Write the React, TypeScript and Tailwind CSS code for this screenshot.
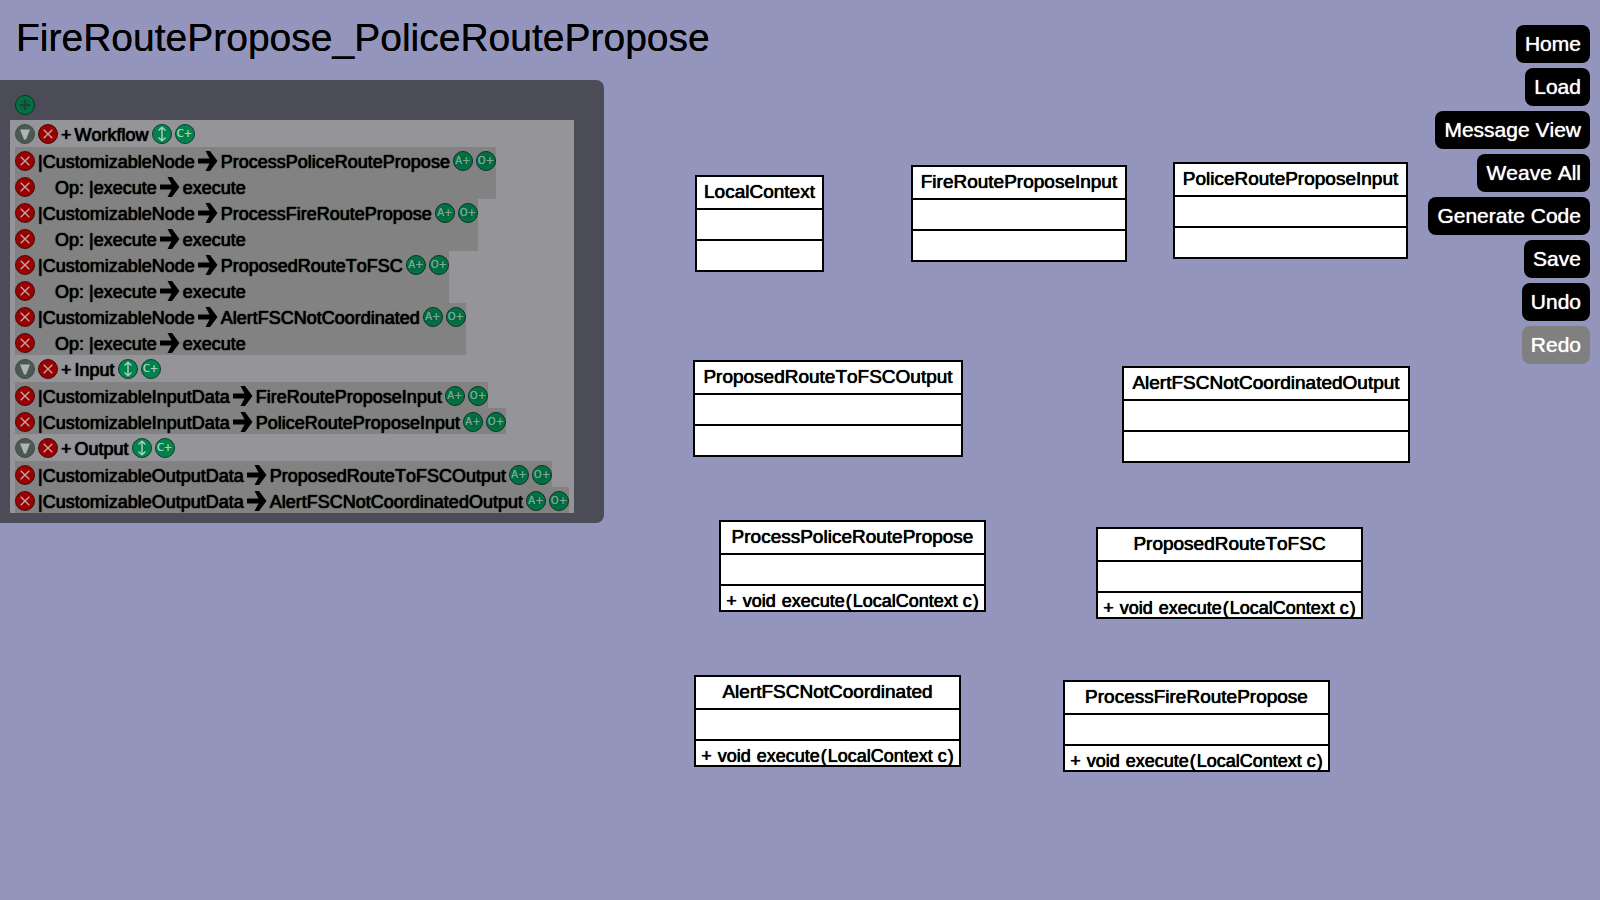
import type { ReactNode } from "react";

type Operation = { from: string; to: string };
type Mapping = { from: string; to: string; operations: Operation[] };
type Category = { name: string; mappings: Mapping[] };
type ClassNode = { name: string; place: string; method?: boolean };
type Action = { label: string; disabled?: boolean };

const execute: Operation = { from: "execute", to: "execute" };

const categories: Category[] = [
  {
    name: "Workflow",
    mappings: [
      { from: "CustomizableNode", to: "ProcessPoliceRoutePropose", operations: [execute] },
      { from: "CustomizableNode", to: "ProcessFireRoutePropose", operations: [execute] },
      { from: "CustomizableNode", to: "ProposedRouteToFSC", operations: [execute] },
      { from: "CustomizableNode", to: "AlertFSCNotCoordinated", operations: [execute] },
    ],
  },
  {
    name: "Input",
    mappings: [
      { from: "CustomizableInputData", to: "FireRouteProposeInput", operations: [] },
      { from: "CustomizableInputData", to: "PoliceRouteProposeInput", operations: [] },
    ],
  },
  {
    name: "Output",
    mappings: [
      { from: "CustomizableOutputData", to: "ProposedRouteToFSCOutput", operations: [] },
      { from: "CustomizableOutputData", to: "AlertFSCNotCoordinatedOutput", operations: [] },
    ],
  },
];

const nodes: ClassNode[] = [
  { name: "LocalContext", place: "left-[695px] top-[175px] w-[129px]" },
  { name: "FireRouteProposeInput", place: "left-[911px] top-[165px] w-[216px]" },
  { name: "PoliceRouteProposeInput", place: "left-[1173px] top-[162px] w-[235px]" },
  { name: "ProposedRouteToFSCOutput", place: "left-[693px] top-[360px] w-[270px]" },
  { name: "AlertFSCNotCoordinatedOutput", place: "left-[1122px] top-[366px] w-[288px]" },
  { name: "ProcessPoliceRoutePropose", place: "left-[719px] top-[520px] w-[267px]", method: true },
  { name: "ProposedRouteToFSC", place: "left-[1096px] top-[527px] w-[267px]", method: true },
  { name: "AlertFSCNotCoordinated", place: "left-[694px] top-[675px] w-[267px]", method: true },
  { name: "ProcessFireRoutePropose", place: "left-[1063px] top-[680px] w-[267px]", method: true },
];

const actions: Action[] = [
  { label: "Home" },
  { label: "Load" },
  { label: "Message View" },
  { label: "Weave All" },
  { label: "Generate Code" },
  { label: "Save" },
  { label: "Undo" },
  { label: "Redo", disabled: true },
];

const tones = {
  red: "border-[#3d0a0a] bg-radial from-[#8c0000] to-[#a80000] text-[#c9a3a3]",
  green: "border-[#0b2e20] bg-radial from-[#00603a] to-[#007f4c] text-[#7fa596]",
  bright: "border-[#0b3a28] bg-radial from-[#007a49] to-[#008c55] text-[#a9cdbf]",
  dark: "border-[#0b2e20] bg-radial from-[#00603a] to-[#007f4c] text-[#1f4033]",
  gray: "border-[#3f4c46] bg-[#4a5952] text-[#b0b3b2]",
};

function RoundButton({ tone, label, children }: { tone: keyof typeof tones; label: string; children: ReactNode }) {
  return (
    <button
      type="button"
      aria-label={label}
      className={`flex size-5 shrink-0 items-center justify-center rounded-full border font-['DejaVu_Sans',sans-serif] text-[10px] leading-none [text-shadow:0_0_0_currentColor] ${tones[tone]}`}
    >
      {children}
    </button>
  );
}

function RemoveButton({ label }: { label: string }) {
  return (
    <RoundButton tone="red" label={`Remove ${label}`}>
      <svg viewBox="0 0 18 18" className="size-[18px]" fill="none" stroke="currentColor" strokeWidth="1.4">
        <path d="M4.700 4.700 13.300 13.300M13.300 4.700 4.700 13.300" />
      </svg>
    </RoundButton>
  );
}

function Arrow() {
  return (
    <svg viewBox="0 0 20 20" className="size-5 shrink-0" aria-hidden="true">
      <path d="M0 7.500H11.500L7.500 0H12L19.500 10 12 20H7.500L11.500 12.500H0Z" fill="#000" />
    </svg>
  );
}

function CategoryBlock({ category }: { category: Category }) {
  return (
    <li>
      <div className="flex h-[27px] items-center gap-[3px] pt-px">
        <RoundButton tone="gray" label={`Collapse ${category.name}`}>
          <svg viewBox="0 0 18 18" className="size-[18px]" fill="currentColor">
            <path d="M4 4.500H14L10 14.500H8Z" />
          </svg>
        </RoundButton>
        <RemoveButton label={category.name} />
        <span className="pt-px">+</span>
        <span className="pt-px">{category.name}</span>
        <RoundButton tone="bright" label={`Move ${category.name}`}>
          <svg viewBox="0 0 18 18" className="size-[18px]" fill="none" stroke="currentColor" strokeWidth="1.500">
            <path d="M9 2.500V15.500M5.500 5.500 9 2.200 12.500 5.500M5.500 12.500 9 15.800 12.500 12.500" />
          </svg>
        </RoundButton>
        <RoundButton tone="bright" label={`Add class to ${category.name}`}>C+</RoundButton>
      </div>
      <ul>
        {category.mappings.map((mapping) => (
          <li key={mapping.to} className="w-fit bg-[#828282]">
            <div className="flex h-[26px] items-center gap-[3px] pt-[2px]">
              <RemoveButton label={mapping.to} />
              <span className="pt-[2px]">|{mapping.from}</span>
              <Arrow />
              <span className="pt-[2px]">{mapping.to}</span>
              <RoundButton tone="green" label={`Add attribute to ${mapping.to}`}>A+</RoundButton>
              <RoundButton tone="green" label={`Add operation to ${mapping.to}`}>O+</RoundButton>
            </div>
            {mapping.operations.map((operation) => (
              <div key={operation.from} className="flex h-[26px] items-center gap-[3px] pt-[2px]">
                <RemoveButton label={operation.to} />
                <span className="pt-[2px] pl-[17px]">Op: |{operation.from}</span>
                <Arrow />
                <span className="pt-[2px]">{operation.to}</span>
              </div>
            ))}
          </li>
        ))}
      </ul>
    </li>
  );
}

function ClassBox({ node }: { node: ClassNode }) {
  return (
    <article className={`absolute divide-y-2 divide-black border-2 border-black bg-white whitespace-nowrap ${node.place}`}>
      <h2 className="flex h-[33px] justify-center pt-[3px] text-[19px] leading-6">{node.name}</h2>
      <div className="h-[31px]" />
      {node.method ? (
        <div className="flex h-6 justify-center gap-px whitespace-pre pt-[5px] text-[18px] leading-5">
          <span>+ </span>
          <span>void </span>
          <span>execute</span>
          <span>(</span>
          <span>LocalContext c</span>
          <span>)</span>
        </div>
      ) : (
        <div className="h-[29px]" />
      )}
    </article>
  );
}

export default function App() {
  return (
    <div className="relative flex min-h-screen items-start justify-between bg-[#9395bc] font-['Liberation_Sans',Arial,sans-serif] text-black [font-kerning:none]">
      <div>
        <h1 className="h-20 pt-[18px] pl-4 text-[39px] leading-10 [text-shadow:0_0_0_#000]">FireRoutePropose_PoliceRoutePropose</h1>
        <aside className="w-fit rounded-r-lg bg-[#4c4c58] pt-[15px] pr-[30px] pb-[10px] pl-[10px] text-[18px] leading-5 [text-shadow:0_0_1px_#000,0_0_1px_#000]">
          <div className="h-[25px] pl-[5px]">
            <RoundButton tone="dark" label="Add category">
              <svg viewBox="0 0 18 18" className="size-[18px]" fill="none" stroke="currentColor" strokeWidth="2">
                <path d="M9 4V14M4 9H14" />
              </svg>
            </RoundButton>
          </div>
          <ul className="bg-[#959499] px-[5px]">
            {categories.map((category) => (
              <CategoryBlock key={category.name} category={category} />
            ))}
          </ul>
        </aside>
      </div>

      <main className="[text-shadow:0_0_1px_#000,0_0_0_#000]">
        {nodes.map((node) => (
          <ClassBox key={node.name} node={node} />
        ))}
      </main>

      <nav className="relative flex flex-col items-end gap-[5px] pt-[25px] pr-[10px]">
        {actions.map((action) => (
          <button
            key={action.label}
            type="button"
            disabled={action.disabled}
            className="h-[38px] rounded-lg bg-black px-[9px] text-[21px] leading-6 text-white [font-kerning:none] [text-shadow:0_0_1px_#fff] disabled:bg-[#808080]"
          >
            {action.label}
          </button>
        ))}
      </nav>
    </div>
  );
}
